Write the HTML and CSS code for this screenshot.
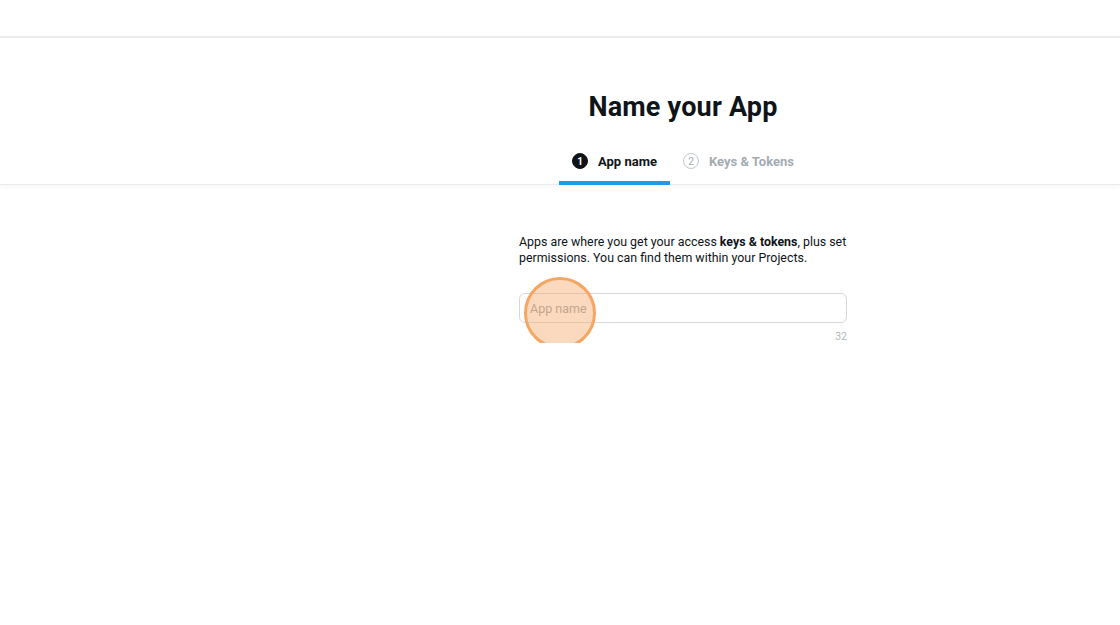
FILE: index.html
```html
<!DOCTYPE html>
<html>
<head>
    <meta name="viewport" content="width=device-width, initial-scale=1.0">
    <link rel="stylesheet" href="styles.css">
</head>
<body>
    <div class="topbar"></div>
    <div class="header">
        <h1>Name your App</h1>
        <div class="steps">
            <div class="step active">
                <span class="step-num">1</span>
                <span class="step-label">App name</span>
            </div>
            <div class="step">
                <span class="step-num">2</span>
                <span class="step-label">Keys &amp; Tokens</span>
            </div>
        </div>
    </div>
    <div class="content">
        <div class="form">
            <p class="intro">Apps are where you get your access <strong>keys &amp; tokens</strong>, plus set permissions. You can find them within your Projects.</p>
            <div class="field">
                <input type="text" placeholder="App name">
                <span class="click-mark"></span>
            </div>
            <div class="counter">32</div>
        </div>
    </div>
</body>
</html>
```

FILE: styles.css
```css
html, body {
    margin: 0;
    padding: 0;
    background: #ffffff;
    font-family: Roboto, "Liberation Sans", Arial, sans-serif;
    color: #0f1419;
}

.topbar {
    height: 36px;
    border-bottom: 2px solid #eceeee;
}

/* main column sits right of an empty 246px sidebar */
.header {
    display: flex;
    flex-direction: column;
    align-items: center;
    padding-left: 246px;
    border-bottom: 1px solid #e9ebec;
    box-shadow: 0 2px 4px rgba(0, 0, 0, 0.04);
}

h1 {
    margin: 53px 0 0 0;
    font-size: 27px;
    line-height: 32px;
    font-weight: 700;
    letter-spacing: 0.2px;
}

.steps {
    display: flex;
    margin-top: 22px;
}

.step {
    display: flex;
    align-items: center;
    gap: 10px;
    padding: 0 13px 4px;
    height: 40px;
    border-bottom: 4px solid transparent;
    box-sizing: border-box;
    margin-bottom: -1px;
    color: #a4abb0;
    font-size: 13px;
    font-weight: 700;
}

.step.active {
    color: #0f1419;
    border-bottom-color: #1d9bf0;
}

.step-num {
    width: 16px;
    height: 16px;
    border-radius: 50%;
    box-sizing: border-box;
    border: 1px solid #c2c8cc;
    display: flex;
    align-items: center;
    justify-content: center;
    font-size: 10px;
    font-weight: 400;
}

.step.active .step-num {
    background: #0f1419;
    border-color: #0f1419;
    color: #ffffff;
    font-weight: 700;
}

.content {
    display: flex;
    justify-content: center;
    padding-left: 246px;
    padding-top: 49px;
}

.form {
    width: 328px;
}

.intro {
    margin: 0;
    font-size: 12.4px;
    line-height: 16px;
}

.intro strong {
    font-weight: 700;
}

.field {
    position: relative;
    margin-top: 27px;
}

.field input {
    display: block;
    width: 100%;
    height: 30px;
    box-sizing: border-box;
    border: 1px solid #d3d9dd;
    border-radius: 6px;
    padding: 0 10px;
    font-family: inherit;
    font-size: 12.5px;
    outline: none;
}

.field input::placeholder {
    color: #9aa0a4;
}

.click-mark {
    position: absolute;
    z-index: 5;
    left: 5px;
    top: -16px;
    width: 66px;
    height: 66px;
    border-radius: 50%;
    border: 3px solid #f4a662;
    background: rgba(247, 170, 110, 0.45);
    pointer-events: none;
}

.counter {
    text-align: right;
    font-size: 10.5px;
    color: #b3b9bd;
    margin-top: 7px;
}
```
